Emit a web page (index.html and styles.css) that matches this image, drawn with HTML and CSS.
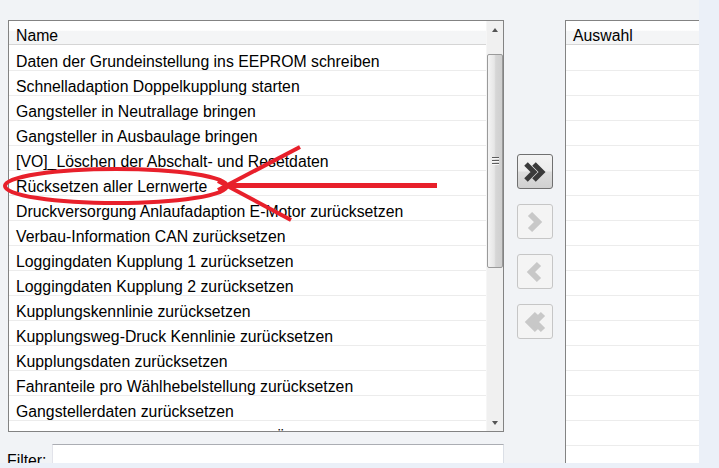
FILE: index.html
```html
<!DOCTYPE html>
<html>
<head>
<meta charset="utf-8">
<link rel="stylesheet" href="styles.css">
</head>
<body>
<div class="app">
  <div class="left">
    <div class="listbox">
      <div class="list">
        <div class="hdr">Name</div>
        <div class="rows">
          <div class="row">Daten der Grundeinstellung ins EEPROM schreiben</div>
          <div class="row">Schnelladaption Doppelkupplung starten</div>
          <div class="row">Gangsteller in Neutrallage bringen</div>
          <div class="row">Gangsteller in Ausbaulage bringen</div>
          <div class="row">[VO]_Löschen der Abschalt- und Resetdaten</div>
          <div class="row">Rücksetzen aller Lernwerte</div>
          <div class="row">Druckversorgung Anlaufadaption E-Motor zurücksetzen</div>
          <div class="row">Verbau-Information CAN zurücksetzen</div>
          <div class="row">Loggingdaten Kupplung 1 zurücksetzen</div>
          <div class="row">Loggingdaten Kupplung 2 zurücksetzen</div>
          <div class="row">Kupplungskennlinie zurücksetzen</div>
          <div class="row">Kupplungsweg-Druck Kennlinie zurücksetzen</div>
          <div class="row">Kupplungsdaten zurücksetzen</div>
          <div class="row">Fahranteile pro Wählhebelstellung zurücksetzen</div>
          <div class="row">Gangstellerdaten zurücksetzen</div>
          <div class="row cut">Lernwerte der Kupplungsadaptionen Überwachung zurücksetzen</div>
        </div>
      </div>
      <div class="scrollbar">
        <div class="sb-btn"><span class="arr-up"></span></div>
        <div class="sb-gap"></div>
        <div class="thumb"><span class="grip"></span><span class="grip"></span><span class="grip"></span></div>
        <div class="track"></div>
        <div class="sb-btn"><span class="arr-down"></span></div>
      </div>
    </div>
    <div class="filter">
      <div class="flabel">Filter:</div>
      <div class="finput"></div>
    </div>
  </div>

  <div class="buttons">
    <div class="btn on">
      <svg width="36" height="35" viewBox="0 0 36 35">
        <polyline points="9,10 17,18 9,26" fill="none" stroke="#3a3a3a" stroke-width="5"/>
        <polyline points="17,10 25,18 17,26" fill="none" stroke="#3a3a3a" stroke-width="5"/>
      </svg>
    </div>
    <div class="btn off">
      <svg width="36" height="35" viewBox="0 0 36 35">
        <polyline points="13,10 21,18 13,26" fill="none" stroke="#c8c8c8" stroke-width="6"/>
      </svg>
    </div>
    <div class="btn off">
      <svg width="36" height="35" viewBox="0 0 36 35">
        <polyline points="22,10 14,18 22,26" fill="none" stroke="#c8c8c8" stroke-width="6"/>
      </svg>
    </div>
    <div class="btn off">
      <svg width="36" height="35" viewBox="0 0 36 35">
        <polyline points="20,10 12,18 20,26" fill="none" stroke="#c8c8c8" stroke-width="6"/>
        <polyline points="26,10 18,18 26,26" fill="none" stroke="#c8c8c8" stroke-width="6"/>
      </svg>
    </div>
  </div>

  <div class="rightbox">
    <div class="hdr">Auswahl</div>
    <div class="rows">
      <div class="row"></div><div class="row"></div><div class="row"></div><div class="row"></div>
      <div class="row"></div><div class="row"></div><div class="row"></div><div class="row"></div>
      <div class="row"></div><div class="row"></div><div class="row"></div><div class="row"></div>
      <div class="row"></div><div class="row"></div><div class="row"></div><div class="row"></div>
      <div class="row"></div><div class="row"></div>
    </div>
  </div>

  <svg class="annot" width="699" height="463" viewBox="0 0 699 463">
    <ellipse cx="116" cy="186" rx="111" ry="17" fill="none" stroke="#e8202b" stroke-width="4"/>
    <line x1="226" y1="185.5" x2="437" y2="185.5" stroke="#e8202b" stroke-width="5"/>
    <line x1="218" y1="190" x2="300" y2="147" stroke="#e8202b" stroke-width="4"/>
    <line x1="218" y1="181" x2="291" y2="220" stroke="#e8202b" stroke-width="4"/>
  </svg>
</div>
</body>
</html>
```

FILE: styles.css
```css
html, body {
  margin: 0;
  padding: 0;
}
body {
  background: #ebf0f8;
  width: 719px;
  height: 468px;
  overflow: hidden;
  font-family: "Liberation Sans", Arial, sans-serif;
  color: #000;
}
.app {
  position: relative;
  width: 699px;
  height: 463px;
  overflow: hidden;
  background: #f1f3f6;
  box-sizing: border-box;
  padding: 20px 0 0 8px;
  display: flex;
  align-items: flex-start;
}
.left {
  width: 496px;
  flex: none;
}
.listbox {
  height: 412px;
  box-sizing: border-box;
  border: 1px solid #838383;
  background: #fff;
  display: flex;
}
.list {
  flex: 1;
  overflow: hidden;
}
.hdr {
  height: 24px;
  box-sizing: border-box;
  padding: 6px 0 0 7px;
  line-height: 18px;
  font-size: 15.8px;
  background: linear-gradient(#ffffff 0, #ffffff 40%, #f4f5f6 45%, #f4f5f6 100%);
  border-bottom: 1px solid #d5d5d5;
  white-space: nowrap;
}
.rows {
  padding-top: 1px;
}
.row {
  height: 25px;
  box-sizing: border-box;
  padding: 7px 0 0 7px;
  line-height: 18px;
  font-size: 15.8px;
  border-bottom: 1px solid #ececec;
  white-space: nowrap;
  overflow: hidden;
}
.row.cut {
  padding-top: 8px;
}
.scrollbar {
  width: 16px;
  flex: none;
  background: #f0f0f0;
  border-left: 1px solid #f6f6f6;
  display: flex;
  flex-direction: column;
}
.sb-btn {
  height: 17px;
  display: flex;
  align-items: center;
  justify-content: center;
}
.arr-up {
  width: 0;
  height: 0;
  border-left: 3.5px solid transparent;
  border-right: 3.5px solid transparent;
  border-bottom: 4px solid #555;
}
.arr-down {
  width: 0;
  height: 0;
  border-left: 3.5px solid transparent;
  border-right: 3.5px solid transparent;
  border-top: 4px solid #555;
}
.sb-gap {
  height: 16px;
}
.thumb {
  height: 214px;
  box-sizing: border-box;
  border: 1px solid #9a9a9a;
  border-radius: 2px;
  background: linear-gradient(to right, #f4f4f4 0%, #e6e6e6 45%, #d6d6d6 55%, #cfcfcf 100%);
  display: flex;
  flex-direction: column;
  align-items: center;
  justify-content: flex-start;
  gap: 1px;
  padding-top: 102px;
}
.grip {
  display: block;
  width: 7px;
  height: 1px;
  background: #5c5c5c;
  border-bottom: 1px solid #f6f6f6;
}
.track {
  flex: 1;
}
.filter {
  display: flex;
  margin-top: 12px;
  margin-left: -1px;
}
.flabel {
  width: 45px;
  padding-top: 8px;
  line-height: 18px;
  font-size: 15.8px;
}
.finput {
  flex: 1;
  height: 26px;
  box-sizing: border-box;
  background: #fff;
  border: 1px solid;
  border-color: #abadb3 #dbdfe6 #e3e9ef #e2e3ea;
}
.buttons {
  flex: none;
  width: 36px;
  margin: 0 12px 0 13px;
  padding-top: 134px;
  display: flex;
  flex-direction: column;
  gap: 15px;
}
.btn {
  width: 36px;
  height: 35px;
  box-sizing: border-box;
  border-radius: 3px;
  display: flex;
  align-items: center;
  justify-content: center;
}
.btn svg {
  display: block;
  flex: none;
  margin: -1px;
}
.btn.on {
  border: 1px solid #707070;
  background: linear-gradient(#f3f3f3 0%, #ececec 48%, #dddddd 52%, #d0d0d0 100%);
}
.btn.off {
  border: 1px solid #c6c6c6;
  background: #f4f4f4;
}
.rightbox {
  flex: none;
  width: 160px;
  height: 480px;
  box-sizing: border-box;
  border-left: 1px solid #838383;
  border-top: 1px solid #838383;
  background: #fff;
}
.annot {
  position: absolute;
  left: 0;
  top: 0;
  pointer-events: none;
}
```
